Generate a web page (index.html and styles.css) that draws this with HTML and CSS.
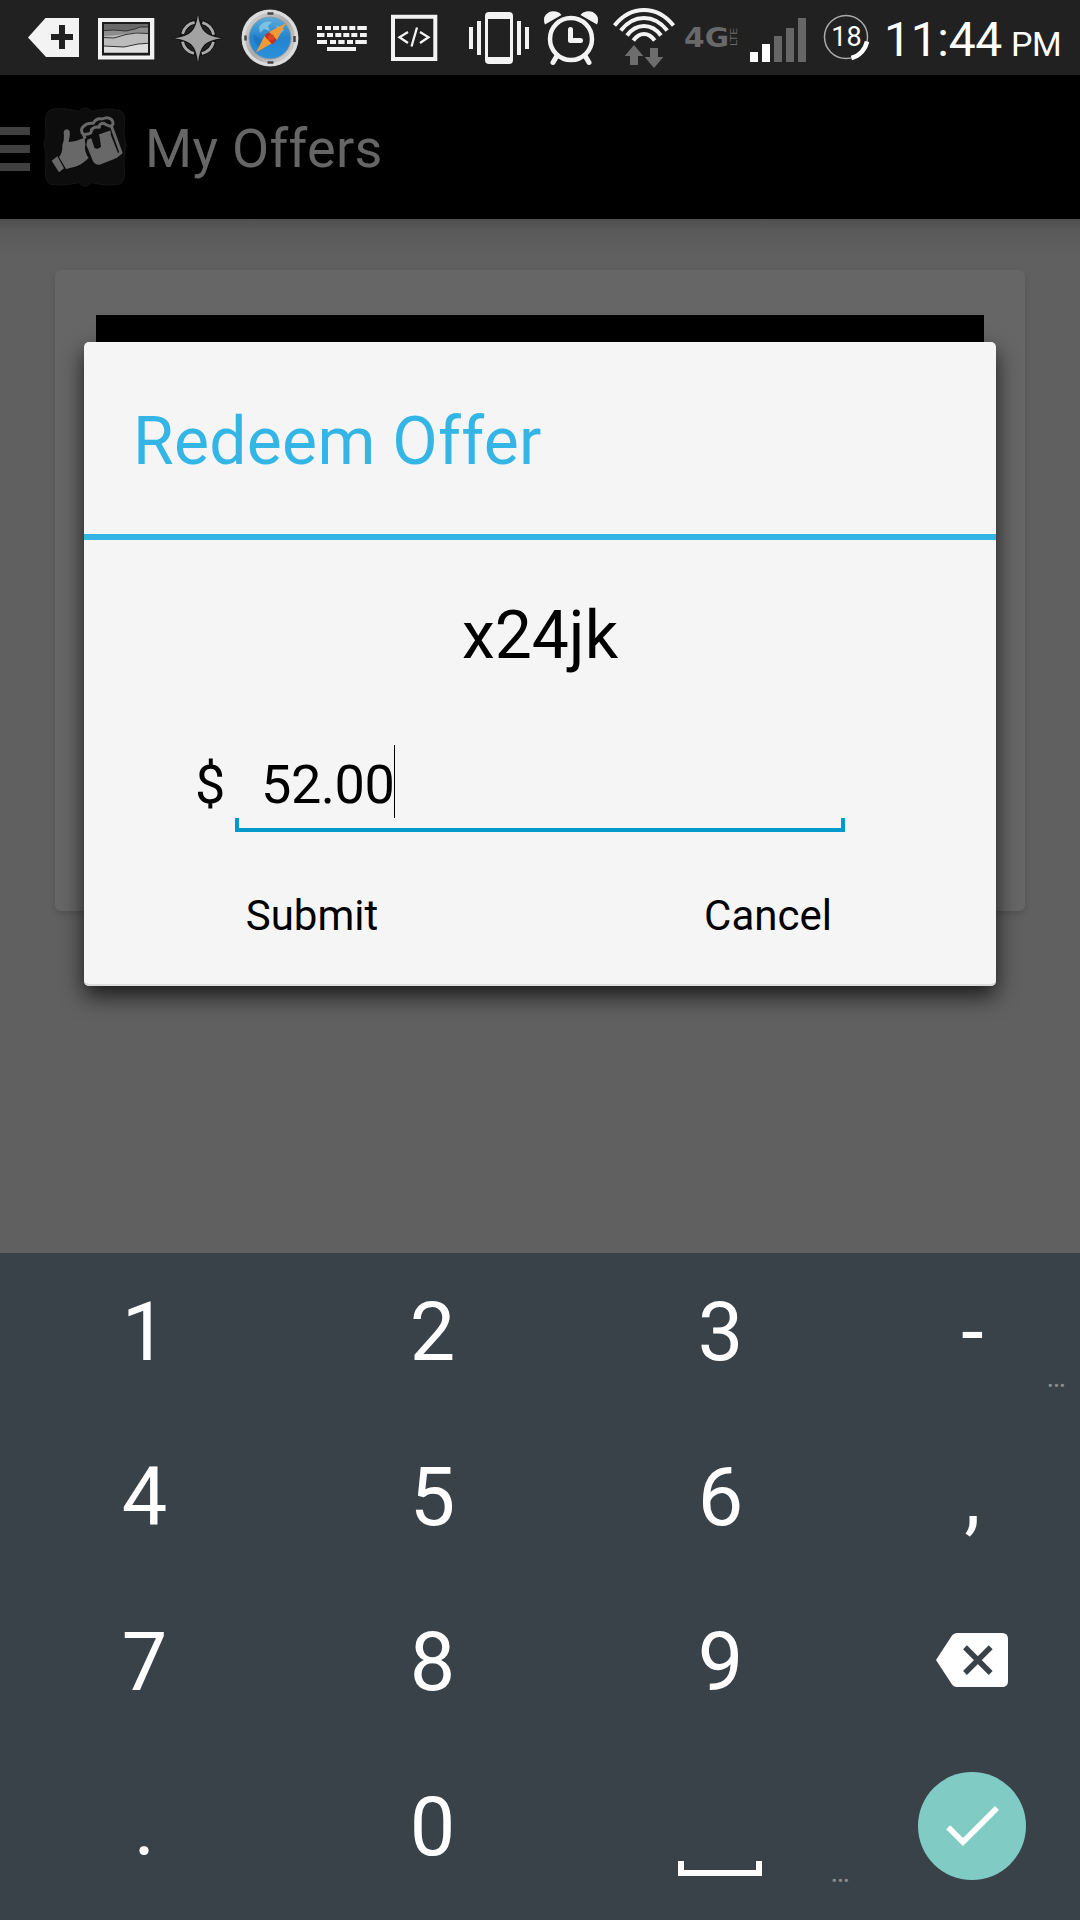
FILE: index.html
```html
<!DOCTYPE html>
<html lang="en">
<head>
<meta charset="utf-8">
<title>My Offers</title>
<link rel="stylesheet" href="styles.css">
</head>
<body>
<div class="screen">
  <header class="status">
    <svg width="90" height="75" viewBox="0 0 90 75"><path fill="#f3f3f3" d="M28 37.500L45.500 18H79v39H46z"/><path fill="#212121" d="M59 25h6v9h8v6h-8v9h-6v-9h-8v-6h8z"/></svg>
    <svg width="75" height="75" viewBox="90 0 75 75"><path fill="#f3f3f3" d="M98 18h56.300v41.500H98z"/><path fill="#1c1c1c" d="M102 22h48v33.500h-48z"/><path fill="#696969" d="M104 24h44v10h-44z"/><path fill="#8d8d8d" d="M104 30.500l10-.5 12 1 9-2 5-2 8 0v14h-44z"/><path fill="#bcbcbc" d="M104 36l10-.5 12-1.500 10-1.500 12 1v15h-44z"/><path fill="#dedede" d="M104 46l20 1 14-3 10-.7v9.500h-44z"/><path fill="none" stroke="#333" d="M104 30.500l10-.5 12 1 9-2 5-2 8 0M104 37.500l10 .5 12-3.500 10-1.500 12 .5M104 46l20 1 14-3 10-.7"/></svg>
    <svg width="65" height="75" viewBox="165 0 65 75"><circle cx="198" cy="38" r="16" fill="none" stroke="#141414" stroke-width="5"/><circle cx="198" cy="38" r="16" fill="none" stroke="#aaa" stroke-width="2.800" stroke-dasharray="17.130 8" stroke-dashoffset="-4"/><path fill="#a2a2a2" stroke="#141414" stroke-width="2" paint-order="stroke" d="M198 14.500Q199.500 27 204.500 31.700 209 36.500 221.500 38.200 209 40 204.500 44.500 199.500 49.500 198 62.500 196.500 49.500 191.500 44.500 187 40 174.500 38.200 187 36.500 191.500 31.700 196.500 27 198 14.500z"/></svg>
    <svg width="80" height="75" viewBox="230 0 80 75"><defs><linearGradient id="rim" x1="0" y1="0" x2="1" y2="1"><stop stop-color="#ddd"/><stop offset=".5" stop-color="#aaa"/><stop offset="1" stop-color="#ddd"/></linearGradient><linearGradient id="dial" x1="0" y1="0" x2="0" y2="1"><stop stop-color="#5cacd9"/><stop offset=".5" stop-color="#2383ce"/><stop offset="1" stop-color="#2b91dc"/></linearGradient></defs><circle cx="270" cy="38" r="28.500" fill="url(#rim)"/><circle cx="270" cy="38" r="26.500" fill="none" stroke="#dcdcdc" stroke-width="3"/><circle cx="270" cy="38" r="21" fill="url(#dial)" stroke="#8b9aa5"/><path fill="#9bd4ea" opacity=".65" d="M259 27q5-7 13-5l-4 4 2 5-6-2-4 4zM276 25l8 5-4 4z"/><path fill="#1669b5" opacity=".5" d="M253 34l8 5 4 8-6 1q-5-5-6-14z"/><path fill="#c92c20" d="M265 35l6-4 7 7-5 6-7-1z"/><path fill="#ee9a35" d="M286 23l-9 17-8-8zM256 52.500l8.500-16.500 7 7.500z"/><circle cx="271" cy="37.500" r="3.200" fill="#d34722"/><path stroke="#444" stroke-width="2.500" d="M267.500 13.500h6M267.500 62.500h6M245.500 35.500v5M294.500 36v6"/></svg>
    <svg width="68" height="75" viewBox="310 0 68 75"><path fill="#f3f3f3" d="M317 26h5v4h-5zM325 26h6v4h-6zM333 26h6v4h-6zM341.300 26h6v4h-6zM349.300 26h6v4h-6zM357.300 26h9.500v4h-9.500zM317 33h7.500v4H317zM327 33h6v4h-6zM335.300 33h6v4h-6zM343.300 33h6v4h-6zM351.300 33h6v4h-6zM360 33h6.800v4H360zM317 40h10v4h-10zM330 40h6v4h-6zM338.300 40h6.300v4h-6.300zM347 40h6v4h-6zM355.300 40h11.500v4h-11.500zM327 47h29v4h-29z"/></svg>
    <svg width="72" height="75" viewBox="378 0 72 75"><g fill="none" stroke="#f3f3f3"><path stroke-width="4" d="M393 16.800h42.300v42.300H393z"/><path stroke-width="2.300" d="M408 32l-8.500 5.300 8.500 5.700M417 27.500l-5.500 19M420 32l8.500 5.300-8.500 5.700"/></g></svg>
    <svg width="90" height="75" viewBox="450 0 90 75"><rect x="485" y="12" width="28" height="52" rx="4" fill="#f3f3f3"/><path fill="#212121" d="M488 19h22v38h-22z"/><path fill="#f3f3f3" d="M469 27h4v22h-4zM477 21h4v34h-4zM517 21h4v34h-4zM525 27h4v22h-4z"/></svg>
    <svg width="68" height="75" viewBox="540 0 68 75"><g fill="#f3f3f3"><path d="M545 24.500q-2.500-6 1-10 4-4.500 10-3 4 .7 5.500 3.500zM597 24.500q2.500-6-1-10-4-4.500-10-3-4 .7-5.500 3.500z"/></g><g fill="none" stroke="#f3f3f3" stroke-linecap="round" stroke-linejoin="round"><circle cx="571" cy="39" r="21" stroke-width="4.500"/><path stroke-width="5" d="M556.500 56.500l-3.500 6M585.500 56.500l3.500 6M570.500 29.500v11h10"/></g></svg>
    <svg width="72" height="75" viewBox="608 0 72 75"><g fill="none" stroke="#f3f3f3" stroke-width="4"><path d="M614.500 25.500Q627 10 644 10t29.500 15.500M620.800 30.500Q630.500 18 644 18t23.200 12.500M627 35.500Q634 26 644 26t17 9.500M633.300 40.500Q638 34 644 34t10.700 6.500"/></g><path fill="#6d6d6d" d="M634 45l9.300 11H638v9h-8v-9h-5.300zM650 48h8v9h5.300L654 68l-9.300-11h5.300z"/></svg>
    <svg width="65" height="75" viewBox="680 0 65 75" class="net"><text x="684" y="47" font-size="27" textLength="45" lengthAdjust="spacingAndGlyphs" font-weight="700">4G</text><text transform="translate(737 46) rotate(-90)" font-size="9" textLength="18" lengthAdjust="spacingAndGlyphs">LTE</text></svg>
    <svg width="67" height="75" viewBox="745 0 67 75"><path fill="#fff" d="M750 52h8v10h-8zM762 44h8v18h-8z"/><path fill="#666" d="M774 36h8v26h-8zM786 28h8v34h-8zM798 18h8v44h-8z"/></svg>
    <svg width="68" height="75" viewBox="812 0 68 75" class="batt"><circle cx="846" cy="37" r="21.500" fill="none" stroke="#aaa" stroke-width="1.500"/><path fill="none" stroke="#fff" stroke-width="4.500" d="M867 41.500A21.500 21.500 0 0 1 851.500 58"/><text x="846.500" y="46" text-anchor="middle" font-size="27">18</text></svg>
    <div class="clock">11:44<span class="ampm">PM</span></div>
  </header>

  <nav class="appbar">
    <svg class="burger" width="30" height="44" viewBox="0 0 30 44"><path fill="#404040" d="M0 0h30v8H0zM0 18h30v8H0zM0 36h30v8H0z"/></svg>
    <svg class="logo" width="84" height="80" viewBox="129 51 252 240">
      <path fill="#0d0d0d" stroke="#161616" stroke-width="3" d="M150 60Q185 50 232 64 240 64 244 57 254 49 266 57 270 64 278 64 325 50 360 62 374 68 374 92 370 135 375 150 382 165 375 180 370 200 374 250 374 272 360 282 320 290 278 278 270 278 266 285 254 293 244 285 240 278 232 278 190 290 150 282 136 272 136 250 140 200 135 180 128 165 135 150 140 130 136 90 136 68 150 60z"/>
      <g fill="#686868">
        <path d="M155 212l17-13 20 36-15 12zM177 201Q188 190 187 165 194 148 191 128 192 118 202 118 212 120 209 138L206 156Q230 154 254 143L256 164Q251 182 266 204 245 225 225 230L198 237z"/>
        <path d="M259 165l3-16 12-4 9 28q9 8 20-3l-4-30 31-12 25 64q-1 11-14 16l-42 16q-13 2-20-10z"/>
      </g>
      <path fill="none" stroke="#686868" stroke-width="9" stroke-linejoin="round" d="M250 134Q238 118 252 108 262 98 280 100 288 84 306 87 325 78 335 89 345 103 332 109 318 105 312 100 296 100 298 112 283 108 274 120 276 131 262 132L250 134 256 146M298 138l34-12M334 108l29 80-18 14"/>
    </svg>
    <h1 class="title">My Offers</h1>
  </nav>

  <main class="content">
    <section class="offer"><div class="offer-image"></div></section>
  </main>

  <section class="keypad">
    <div class="key">1</div><div class="key">2</div><div class="key">3</div><div class="key">-<span class="more">…</span></div>
    <div class="key">4</div><div class="key">5</div><div class="key">6</div><div class="key">,</div>
    <div class="key">7</div><div class="key">8</div><div class="key">9</div>
    <div class="key icon backspace"><svg width="72" height="54" viewBox="0 0 72 54"><path fill="#fff" d="M0 27L16 2.500Q17.700 0 21 0H66q6 0 6 6V48q0 6-6 6H21q-3.300 0-5-2.500z"/><path stroke="#3a4249" stroke-width="5.500" d="M29 14.200L54.700 40M54.700 14.200L29 40"/></svg></div>
    <div class="key">.</div><div class="key">0</div>
    <div class="key space"><svg width="84" height="15" viewBox="0 0 84 15"><path fill="#fff" d="M0 0h6v9h72V0h6v15H0z"/></svg><span class="more">…</span></div>
    <div class="key icon"><svg width="108" height="108" viewBox="0 0 108 108"><circle cx="54" cy="54" r="54" fill="#80cbc4"/><path fill="none" stroke="#fff" stroke-width="5.700" d="M30.200 55.200L45 70 79 36"/></svg></div>
  </section>

  <section class="dialog">
    <h2 class="dialog-title">Redeem Offer</h2>
    <div class="code">x24jk</div>
    <div class="amount">
      <span class="currency">$</span>
      <div class="field"><div class="value"><span>52.00</span><i class="cursor"></i></div><div class="underline"></div></div>
    </div>
    <div class="actions"><div class="action">Submit</div><div class="action">Cancel</div></div>
  </section>
</div>
</body>
</html>
```

FILE: styles.css
```css
* { box-sizing: border-box; }
body { margin: 0; background: #606060; font-family: Roboto, "Liberation Sans", sans-serif; }
h1, h2 { margin: 0; font-weight: 400; }
svg { display: block; flex: none; }

.screen { position: relative; width: 1080px; height: 1920px; display: flex; flex-direction: column; overflow: hidden; }

.status { height: 75px; flex: none; display: flex; background: #212121; color: #fff; }
.net { fill: #696969; font-family: "DejaVu Sans", sans-serif; }
.batt { fill: #fff; }
.clock { padding-left: 4px; font-size: 48px; line-height: 79px; letter-spacing: -.3px; white-space: nowrap; }
.ampm { margin-left: 9px; font-size: 34px; letter-spacing: -.5px; }

.appbar { height: 144px; flex: none; display: flex; align-items: flex-start; background: #000; }
.burger { margin-top: 52px; }
.logo { margin: 32px 0 0 13px; }
.title { margin-left: 18px; font-size: 54px; line-height: 148px; letter-spacing: .3px; color: #666; white-space: nowrap; }

.content { height: 1034px; flex: none; padding: 51px 55px 0; background: linear-gradient(#505050 0, #5b5b5b 14px, #606060 40px); }
.offer { height: 641px; padding: 45px 41px 0; border-radius: 6px; background: #666; box-shadow: 0 3px 6px rgba(0, 0, 0, .15); }
.offer-image { height: 400px; background: #000; }

.keypad { height: 667px; flex: none; display: grid; grid-template-columns: 288px 288px 288px 216px; grid-auto-rows: 165px; background: #3a4249; color: #fff; }
.key { position: relative; padding-left: 1px; text-align: center; font-size: 81px; line-height: 159px; }
.icon { display: flex; justify-content: center; align-items: center; padding: 0 0 9px; }
.backspace { padding-bottom: 11px; }
.space { padding: 113px 0 0 102px; }
.more { position: absolute; right: 14px; bottom: 26px; font-size: 29px; line-height: 29px; color: #8a8d90; }

.dialog { position: absolute; left: 84px; top: 342px; width: 912px; height: 644px; border-radius: 5px; background: #f5f5f5; color: #000; box-shadow: inset 0 -2px 0 #dcdcdc, 0 10px 22px rgba(0, 0, 0, .72); }
.dialog-title { height: 198px; padding: 7px 0 0 49px; border-bottom: 6px solid #33b5e5; font-size: 66px; line-height: 185px; letter-spacing: .3px; color: #33b5e5; }
.code { padding-top: 57px; font-size: 66px; line-height: 78px; text-align: center; }
.amount { display: flex; margin-top: 70px; padding-left: 111px; font-size: 54px; line-height: 79px; }
.currency { width: 40px; }
.field { width: 610px; }
.value { display: flex; height: 73px; padding-left: 26px; letter-spacing: -.45px; }
.cursor { width: 1px; height: 73px; background: #000; }
.underline { height: 14px; border: 4px solid #0099cc; border-top: 0; }
.actions { display: flex; margin-top: 42px; font-size: 42px; line-height: 84px; text-align: center; }
.action { flex: 1; }
```
